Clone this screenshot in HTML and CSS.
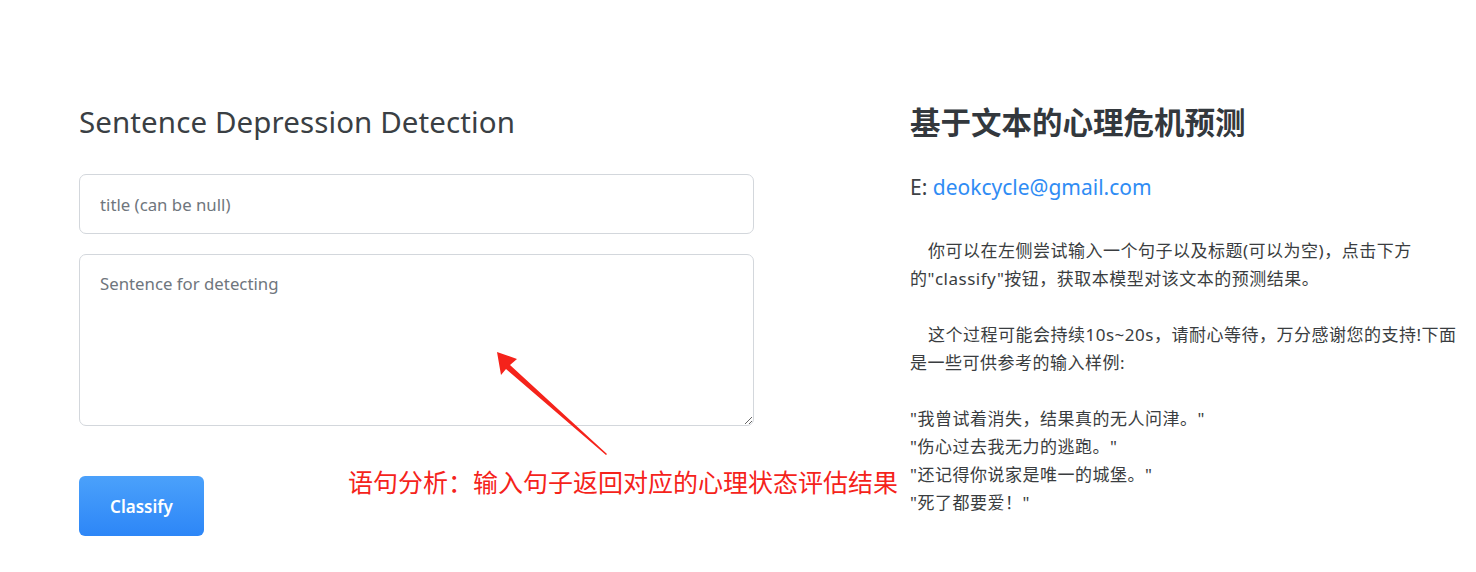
FILE: index.html
```html
<!DOCTYPE html>
<html lang="zh">
<head>
<meta charset="utf-8">
<title>Sentence Depression Detection</title>
<link rel="stylesheet" href="styles.css">
</head>
<body>
<div class="page">
  <div class="left">
    <h1 class="title">Sentence Depression Detection</h1>
    <form class="form">
      <input class="field" type="text" placeholder="title (can be null)">
      <textarea class="field area" placeholder="Sentence for detecting"></textarea>
      <button class="btn" type="button">Classify</button>
    </form>
  </div>
  <div class="right">
    <h2 class="cn-title">基于文本的心理危机预测</h2>
    <p class="email">E: <a href="#">deokcycle@gmail.com</a></p>
    <p class="para indent">你可以在左侧尝试输入一个句子以及标题(可以为空)，点击下方的"classify"按钮，获取本模型对该文本的预测结果。</p>
    <p class="para indent">这个过程可能会持续10s~20s，请耐心等待，万分感谢您的支持!下面是一些可供参考的输入样例:</p>
    <p class="para">"我曾试着消失，结果真的无人问津。"<br>"伤心过去我无力的逃跑。"<br>"还记得你说家是唯一的城堡。"<br>"死了都要爱！"</p>
  </div>
  <div class="note">
    <svg class="arrow" width="140" height="120" viewBox="0 0 140 120">
      <polygon points="7,2 27,9 20,15 117,104 116,105 16,19 11,25" fill="#f5231b"/>
    </svg>
    <span class="note-text">语句分析：输入句子返回对应的心理状态评估结果</span>
  </div>
</div>
</body>
</html>
```

FILE: styles.css
```css
* { box-sizing: border-box; }
html, body { margin: 0; padding: 0; background: #fff; }
body {
  font-family: "Noto Sans", "Noto Sans CJK SC", sans-serif;
  color: #3d4145;
}
.page {
  position: relative;
  display: flex;
  gap: 156px;
  padding: 102px 0 0 79px;
  height: 572px;
}
.left { width: 675px; flex: none; }
.title {
  margin: 0;
  font-size: 29.5px;
  font-weight: 400;
  line-height: 40px;
  color: #3a3f44;
  letter-spacing: 0.1px;
}
.form {
  display: flex;
  flex-direction: column;
  align-items: flex-start;
  margin-top: 32px;
}
.field {
  width: 675px;
  height: 60px;
  border: 1px solid #d3d7dc;
  border-radius: 7px;
  padding: 0 20px;
  font-family: "Noto Sans", sans-serif;
  font-size: 16.8px;
  color: #495057;
  background: #fff;
  outline: none;
}
.field::placeholder { color: #6f767d; }
.area {
  margin-top: 20px;
  height: 172px;
  padding: 17px 20px;
  resize: vertical;
}
.btn {
  margin-top: 50px;
  width: 125px;
  height: 60px;
  border: none;
  border-radius: 6px;
  background: linear-gradient(#4ba1fb, #2d86f7);
  color: #fff;
  font-family: "Noto Sans", sans-serif;
  font-size: 17px;
  font-weight: 600;
}
.right { width: 556px; flex: none; }
.cn-title {
  margin: 0;
  font-size: 30.5px;
  font-weight: 700;
  line-height: 40px;
  color: #33383d;
}
.email {
  margin: 31px 0 0;
  font-size: 21px;
  line-height: 28px;
  color: #3d4145;
}
.email a { color: #2f8cf4; text-decoration: none; }
.para {
  margin: 28px 0 0;
  font-size: 17px;
  line-height: 28px;
  letter-spacing: 0.5px;
  color: #3a3d40;
}
.email + .para { margin-top: 36px; }
.indent { text-indent: 18px; }
.note {
  position: absolute;
  left: 348px;
  top: 350px;
  width: 560px;
  height: 160px;
}
.arrow {
  position: absolute;
  left: 490px;
  top: 0;
  transform: translateX(-348px);
}
.note-text {
  position: absolute;
  left: 0;
  top: 117px;
  font-size: 25px;
  line-height: 30px;
  color: #f5231b;
  white-space: nowrap;
}
```
